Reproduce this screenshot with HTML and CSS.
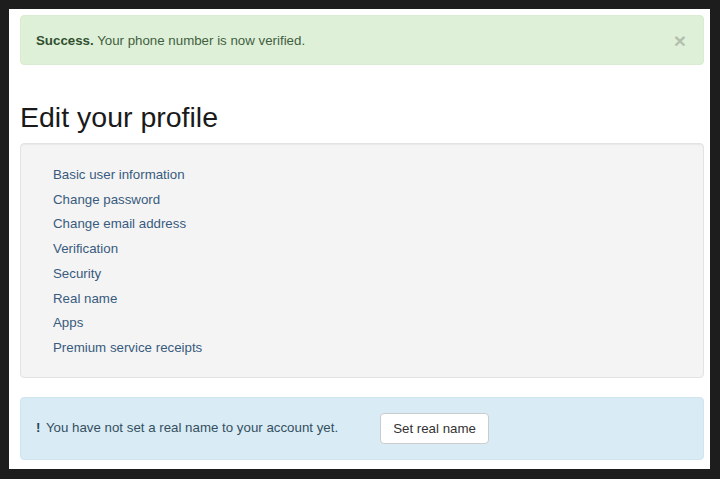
FILE: index.html
```html
<!DOCTYPE html>
<html>
  <head>
    <link rel="stylesheet" href="styles.css">
    <title>Edit your profile</title>
  </head>
  <body>
    <div class="page">
      <div class="alert alert-success">
        <span><strong>Success.</strong> Your phone number is now verified.</span>
        <button class="close" type="button">&times;</button>
      </div>

      <h1>Edit your profile</h1>

      <div class="well">
        <ul class="profile-nav">
          <li><a href="#">Basic user information</a></li>
          <li><a href="#">Change password</a></li>
          <li><a href="#">Change email address</a></li>
          <li><a href="#">Verification</a></li>
          <li><a href="#">Security</a></li>
          <li><a href="#">Real name</a></li>
          <li><a href="#">Apps</a></li>
          <li><a href="#">Premium service receipts</a></li>
        </ul>
      </div>

      <div class="alert alert-info">
        <span class="notice"><strong class="bang">!</strong> You have not set a real name to your account yet.</span>
        <button class="btn" type="button">Set real name</button>
      </div>
    </div>
  </body>
</html>
```

FILE: styles.css
```css
/* RESETS */
*,
*::before,
*::after {
  box-sizing: border-box;
}
html {
  background: #1d1d1d;
}
body {
  margin: 0;
  padding: 9px 10px 10px 9px;
  font: 13.3px / 20px "Liberation Sans", Arial, sans-serif;
  color: #333;
}
button {
  font: inherit;
  margin: 0;
  cursor: pointer;
}
ul {
  list-style: none;
  margin: 0;
  padding: 0;
}

/* Page */
.page {
  background: #fff;
  padding: 6px 6px 10px 11px;
  height: 460px;
}
h1 {
  font-size: 28.5px;
  font-weight: normal;
  line-height: 33px;
  color: #1a1a1a;
  margin: 36px 0 9px;
}

/* Alerts */
.alert {
  display: flex;
  align-items: center;
  padding: 14px 15px;
  border: 1px solid transparent;
  border-radius: 4px;
}
.alert-success {
  background: #dff0d8;
  border-color: #d9ebd1;
  color: #3f5f3f;
  justify-content: space-between;
  padding: 14px 15px 13px;
}
.alert-success strong {
  color: #2f4f2f;
}
.alert-info {
  background: #d9ebf5;
  border-color: #cfe6f0;
  color: #34505f;
  margin-top: 19px;
  padding: 15px;
  gap: 42px;
}
.bang {
  color: #2b4554;
  margin-right: 2px;
}
.close {
  border: none;
  background: transparent;
  padding: 0;
  font-size: 21px;
  font-weight: bold;
  line-height: 1;
  color: #000;
  opacity: 0.2;
  margin-right: 2px;
}

/* Profile menu */
.well {
  background: #f4f4f4;
  border: 1px solid #e3e3e3;
  border-radius: 4px;
  box-shadow: inset 0 1px 1px rgba(0, 0, 0, 0.05);
  padding: 19px 18px 16px 32px;
}
.profile-nav li {
  line-height: 24.7px;
}
.profile-nav a {
  color: #385b7e;
  text-decoration: none;
}

/* Button */
.btn {
  background: #fff;
  border: 1px solid #ccc;
  border-radius: 4px;
  color: #333;
  padding: 5px 12px;
  line-height: 19px;
}
```
